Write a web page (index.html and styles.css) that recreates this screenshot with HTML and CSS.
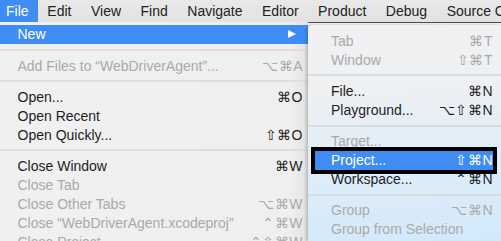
FILE: index.html
```html
<!DOCTYPE html>
<html>
<head>
<meta charset="utf-8">
<link rel="stylesheet" href="styles.css">
</head>
<body>
<div class="screen">
  <div class="menubar">
    <div class="mb-item active first">File</div>
    <div class="mb-item">Edit</div>
    <div class="mb-item">View</div>
    <div class="mb-item">Find</div>
    <div class="mb-item">Navigate</div>
    <div class="mb-item">Editor</div>
    <div class="mb-item">Product</div>
    <div class="mb-item">Debug</div>
    <div class="mb-item">Source Control</div>
  </div>
  <div class="stage">
    <div class="menu main">
      <div class="row sel"><span class="label">New</span><span class="arrow"></span></div>
      <div class="sep"></div>
      <div class="row dis"><span class="label">Add Files to “WebDriverAgent”...</span><span class="key">⌥⌘A</span></div>
      <div class="sep"></div>
      <div class="row"><span class="label">Open...</span><span class="key">⌘O</span></div>
      <div class="row"><span class="label">Open Recent</span></div>
      <div class="row"><span class="label">Open Quickly...</span><span class="key">⇧⌘O</span></div>
      <div class="sep"></div>
      <div class="row"><span class="label">Close Window</span><span class="key">⌘W</span></div>
      <div class="row dis"><span class="label">Close Tab</span></div>
      <div class="row dis"><span class="label">Close Other Tabs</span><span class="key">⌥⌘W</span></div>
      <div class="row dis"><span class="label">Close “WebDriverAgent.xcodeproj”</span><span class="key">⌃⌘W</span></div>
      <div class="row dis"><span class="label">Close Project</span><span class="key">⌃⇧⌘W</span></div>
    </div>
    <div class="side">
      <div class="menu sub">
        <div class="row dis"><span class="label">Tab</span><span class="key">⌘T</span></div>
        <div class="row dis"><span class="label">Window</span><span class="key">⇧⌘T</span></div>
        <div class="sep"></div>
        <div class="row"><span class="label">File...</span><span class="key">⌘N</span></div>
        <div class="row"><span class="label">Playground...</span><span class="key">⌥⇧⌘N</span></div>
        <div class="sep"></div>
        <div class="row dis"><span class="label">Target...</span></div>
        <div class="row sel marked"><span class="label">Project...</span><span class="key">⇧⌘N</span></div>
        <div class="row"><span class="label">Workspace...</span><span class="key">⌃⌘N</span></div>
        <div class="sep"></div>
        <div class="row dis"><span class="label">Group</span><span class="key">⌥⌘N</span></div>
        <div class="row dis"><span class="label">Group from Selection</span></div>
      </div>
    </div>
  </div>
</div>
</body>
</html>
```
FILE: styles.css
```css
html, body {
  margin: 0;
  padding: 0;
  overflow: hidden;
}
body {
  width: 501px;
  height: 241px;
  font-family: "Liberation Sans", Arial, sans-serif;
  font-size: 14px;
  color: #1e1e1e;
  background: #eeeeee;
}
.screen {
  width: 501px;
  height: 241px;
  overflow: hidden;
  display: flex;
  flex-direction: column;
}
.menubar {
  height: 22px;
  flex: none;
  display: flex;
  align-items: stretch;
  background: linear-gradient(#e9e9e9, #e2e2e2);
  white-space: nowrap;
}
.mb-item {
  padding: 0 9.75px;
  line-height: 22px;
  color: #222;
}
.mb-item.first {
  padding-left: 6px;
  padding-right: 9px;
}
.mb-item.active {
  background: #3f8cf4;
  color: #fff;
}
.stage {
  flex: 1;
  display: flex;
  min-height: 0;
}
.menu {
  display: flex;
  flex-direction: column;
  white-space: nowrap;
}
.main {
  width: 308px;
  flex: none;
  padding-top: 3px;
  background: linear-gradient(90deg, #f0f0f0 0, #efefef 290px, #e2e2e2 308px);
}
.row {
  height: 18.9px;
  flex: none;
  display: flex;
  align-items: center;
  justify-content: space-between;
}
.main .row {
  padding: 0 5px 0 17.5px;
}
.row.dis {
  color: #a9a9a9;
}
.row.sel {
  background: #3f8cf4;
  color: #fff;
}
.key {
  font-size: 14px;
  letter-spacing: 0.5px;
}
.sep {
  height: 12.4px;
  flex: none;
  display: flex;
  align-items: center;
}
.sep::before {
  content: "";
  flex: 1;
  height: 2px;
  background: #dedede;
}
.arrow {
  width: 0;
  height: 0;
  margin-right: 7px;
  border-top: 4.5px solid transparent;
  border-bottom: 4.5px solid transparent;
  border-left: 8px solid #fff;
}
.side {
  flex: 1;
  display: flex;
  flex-direction: column;
  border-top: 1px solid #4d4d4d;
  padding-top: 2px;
  background: #eeeeee;
}
.sub {
  flex: 1;
  padding-top: 6.5px;
  border-top-left-radius: 5px;
  box-shadow: -2px 0 3px rgba(0,0,0,0.18);
  background: linear-gradient(175deg, #f1f1f2 0, #eef0f2 30%, #e0edf8 60%, #d3e9fb 100%);
}
.sub .row {
  margin: 0 8px 0 7px;
  padding: 0 0 0 16px;
}
.sub .sep::before {
  background: #d6dde3;
}
.row.marked {
  outline: 4px solid #000;
  outline-offset: 0;
}
```
